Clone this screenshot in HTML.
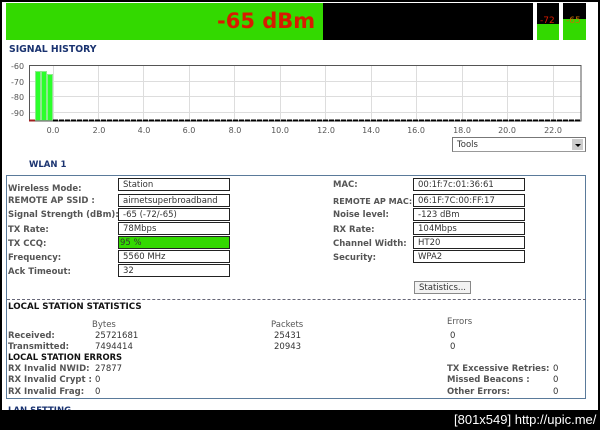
<!DOCTYPE html>
<html><head><meta charset="utf-8"><style>
html,body{margin:0;padding:0;background:#000;}
#p{position:relative;width:600px;height:430px;overflow:hidden;background:#000;font-family:"DejaVu Sans","Liberation Sans",sans-serif;font-size:8px;}
#w{position:absolute;left:2px;top:2px;width:596px;height:408px;background:#fff;}
#b{position:absolute;left:0;top:0;width:600px;height:410px;filter:blur(.3px);}
.a{position:absolute;}
.t{position:absolute;line-height:12px;white-space:nowrap;margin-top:1px;}
.l{color:#555;font-weight:bold;font-size:8.500px;left:8px;}
.r{color:#555;font-weight:bold;font-size:8.500px;left:333px;}
.v{color:#333;font-size:8.500px;}
.f{position:absolute;box-sizing:border-box;width:112px;height:13px;border:1px solid #222;background:#fff;color:#333;font-size:8.500px;line-height:13px;padding-left:4px;white-space:nowrap;overflow:hidden;}
.h{color:#111;font-weight:bold;font-size:8.700px;left:8px;}
.ax{color:#555;font-size:8px;transform:translateX(-50%);}
.hd{color:#1a3370;font-weight:bold;font-size:8.500px;}
</style></head><body><div id="p"><div id="w"></div><div id="b">

<div class="a" style="left:6px;top:3px;width:317px;height:37px;background:#33d900"></div>
<div class="a" style="left:323px;top:3px;width:210px;height:37px;background:#000"></div>
<div class="t" style="left:217px;top:8px;font-size:21px;line-height:24px;font-weight:bold;color:#d81a00">-65 dBm</div>
<div class="a" style="left:537px;top:3px;width:22px;height:37px;background:#33d900"></div>
<div class="a" style="left:537px;top:3px;width:22px;height:21px;background:#000"></div>
<div class="a" style="left:563px;top:3px;width:23px;height:37px;background:#33d900"></div>
<div class="a" style="left:563px;top:3px;width:23px;height:16px;background:#000"></div>
<div class="t" style="left:540px;top:14px;font-size:9px;color:#d81a00">-72</div>
<div class="t" style="left:566px;top:14px;font-size:9px;color:#c87000">-65</div>

<div class="t hd" style="left:9px;top:43px;font-size:9.300px">SIGNAL HISTORY</div>

<svg class="a" style="left:0;top:55px" width="600" height="80" viewBox="0 55 600 80">
<g stroke="#ddd" stroke-width="1" fill="none">
<path d="M30 81.500H581M30 96.500H581M30 112.500H581"/>
<path d="M53.500 65V120M98.500 65V120M143.500 65V120M189.500 65V120M234.500 65V120M280.500 65V120M325.500 65V120M371.500 65V120M416.500 65V120M462.500 65V120M507.500 65V120M553.500 65V120"/>
</g>
<g fill="#2cff2c" stroke="#8fe88f" stroke-width="1">
<rect x="35.500" y="71.500" width="5" height="49"/>
<rect x="41.500" y="71.500" width="5" height="49"/>
<rect x="47.500" y="74.500" width="5" height="46"/>
</g>
<rect x="29.500" y="65.500" width="551.500" height="55.500" fill="none" stroke="#555" stroke-width="1"/>
<path d="M53 120.500H581" stroke="#000" stroke-width="2" stroke-dasharray="5 1" fill="none"/>
<path d="M29 120.500H35" stroke="#a02020" stroke-width="2" fill="none"/>
</svg>
<div class="t" style="left:11px;top:60px;color:#555;font-size:8px">-60</div>
<div class="t" style="left:11px;top:76px;color:#555;font-size:8px">-70</div>
<div class="t" style="left:11px;top:91px;color:#555;font-size:8px">-80</div>
<div class="t" style="left:11px;top:107px;color:#555;font-size:8px">-90</div>
<div class="t ax" style="left:53px;top:124px">0.0</div>
<div class="t ax" style="left:99px;top:124px">2.0</div>
<div class="t ax" style="left:144px;top:124px">4.0</div>
<div class="t ax" style="left:189px;top:124px">6.0</div>
<div class="t ax" style="left:235px;top:124px">8.0</div>
<div class="t ax" style="left:280px;top:124px">10.0</div>
<div class="t ax" style="left:326px;top:124px">12.0</div>
<div class="t ax" style="left:371px;top:124px">14.0</div>
<div class="t ax" style="left:416px;top:124px">16.0</div>
<div class="t ax" style="left:462px;top:124px">18.0</div>
<div class="t ax" style="left:507px;top:124px">20.0</div>
<div class="t ax" style="left:553px;top:124px">22.0</div>

<div class="a" style="left:452px;top:137px;width:134px;height:15px;box-sizing:border-box;border:1px solid #777;border-bottom-color:#999;background:#fff"></div>
<div class="t" style="left:457px;top:138px;font-size:8.500px;color:#333">Tools</div>
<div class="a" style="left:572px;top:139px;width:11px;height:11px;background:#ccc"></div>
<div class="a" style="left:575px;top:144px;width:0;height:0;border:3px solid transparent;border-top:3px solid #000;border-bottom:0"></div>

<div class="t hd" style="left:29px;top:158px">WLAN 1</div>

<div class="a" style="left:6px;top:175px;width:580px;height:224px;box-sizing:border-box;border:1px solid #5a7a9a"></div>

<div class="t l" style="top:182px">Wireless Mode:</div>
<div class="t l" style="top:194px">REMOTE AP SSID :</div>
<div class="t l" style="top:208px">Signal Strength (dBm):</div>
<div class="t l" style="top:223px">TX Rate:</div>
<div class="t l" style="top:237px">TX CCQ:</div>
<div class="t l" style="top:251px">Frequency:</div>
<div class="t l" style="top:265px">Ack Timeout:</div>

<div class="f" style="left:118px;top:178px">Station</div>
<div class="f" style="left:118px;top:194px">airnetsuperbroadband</div>
<div class="f" style="left:118px;top:208px">-65 (-72/-65)</div>
<div class="f" style="left:118px;top:222px">78Mbps</div>
<div class="f" style="left:118px;top:236px;background:#33d900;padding-left:1px">95 %</div>
<div class="f" style="left:118px;top:250px">5560 MHz</div>
<div class="f" style="left:118px;top:264px">32</div>

<div class="t r" style="top:178px">MAC:</div>
<div class="t r" style="top:194px;font-size:8.100px">REMOTE AP MAC:</div>
<div class="t r" style="top:208px">Noise level:</div>
<div class="t r" style="top:223px">RX Rate:</div>
<div class="t r" style="top:237px">Channel Width:</div>
<div class="t r" style="top:251px">Security:</div>

<div class="f" style="left:413px;top:178px">00:1f:7c:01:36:61</div>
<div class="f" style="left:413px;top:194px">06:1F:7C:00:FF:17</div>
<div class="f" style="left:413px;top:208px">-123 dBm</div>
<div class="f" style="left:413px;top:222px">104Mbps</div>
<div class="f" style="left:413px;top:236px">HT20</div>
<div class="f" style="left:413px;top:250px">WPA2</div>

<div class="a" style="left:414px;top:281px;width:57px;height:13px;box-sizing:border-box;border:1px solid #888;background:#f2f2f2;color:#333;font-size:8.500px;line-height:12px;text-align:center">Statistics...</div>

<div class="a" style="left:7px;top:299px;width:579px;border-top:1px dashed #667"></div>

<div class="t h" style="top:300px">LOCAL STATION STATISTICS</div>
<div class="t" style="left:92px;top:318px;color:#555;font-size:8.500px">Bytes</div>
<div class="t" style="left:271px;top:318px;color:#555;font-size:8.500px">Packets</div>
<div class="t" style="left:447px;top:315px;color:#555;font-size:8.500px">Errors</div>

<div class="t l" style="top:329px">Received:</div>
<div class="t l" style="top:340px">Transmitted:</div>
<div class="t v" style="left:95px;top:329px">25721681</div>
<div class="t v" style="left:95px;top:340px">7494414</div>
<div class="t v" style="left:274px;top:329px">25431</div>
<div class="t v" style="left:274px;top:340px">20943</div>
<div class="t v" style="left:450px;top:329px">0</div>
<div class="t v" style="left:450px;top:340px">0</div>

<div class="t h" style="top:350px;font-size:8.400px">LOCAL STATION ERRORS</div>
<div class="t l" style="top:362px">RX Invalid NWID:</div>
<div class="t l" style="top:373px">RX Invalid Crypt :</div>
<div class="t l" style="top:385px">RX Invalid Frag:</div>
<div class="t v" style="left:95px;top:362px">27877</div>
<div class="t v" style="left:95px;top:373px">0</div>
<div class="t v" style="left:95px;top:385px">0</div>

<div class="t" style="left:447px;top:362px;color:#555;font-weight:bold;font-size:8.500px">TX Excessive Retries:</div>
<div class="t" style="left:447px;top:373px;color:#555;font-weight:bold;font-size:8.500px">Missed Beacons :</div>
<div class="t" style="left:447px;top:385px;color:#555;font-weight:bold;font-size:8.500px">Other Errors:</div>
<div class="t v" style="left:553px;top:362px">0</div>
<div class="t v" style="left:553px;top:373px">0</div>
<div class="t v" style="left:553px;top:385px">0</div>

<div class="t hd" style="left:8px;top:404px">LAN SETTING</div>
</div>
<div class="a" style="left:0;top:410px;width:600px;height:20px;background:#000"></div>
<div class="t" style="left:454px;top:411px;font-size:13px;line-height:16px;color:#fff;font-family:'Liberation Sans',sans-serif">[801x549] http://upic.me/</div>
</div></body></html>
